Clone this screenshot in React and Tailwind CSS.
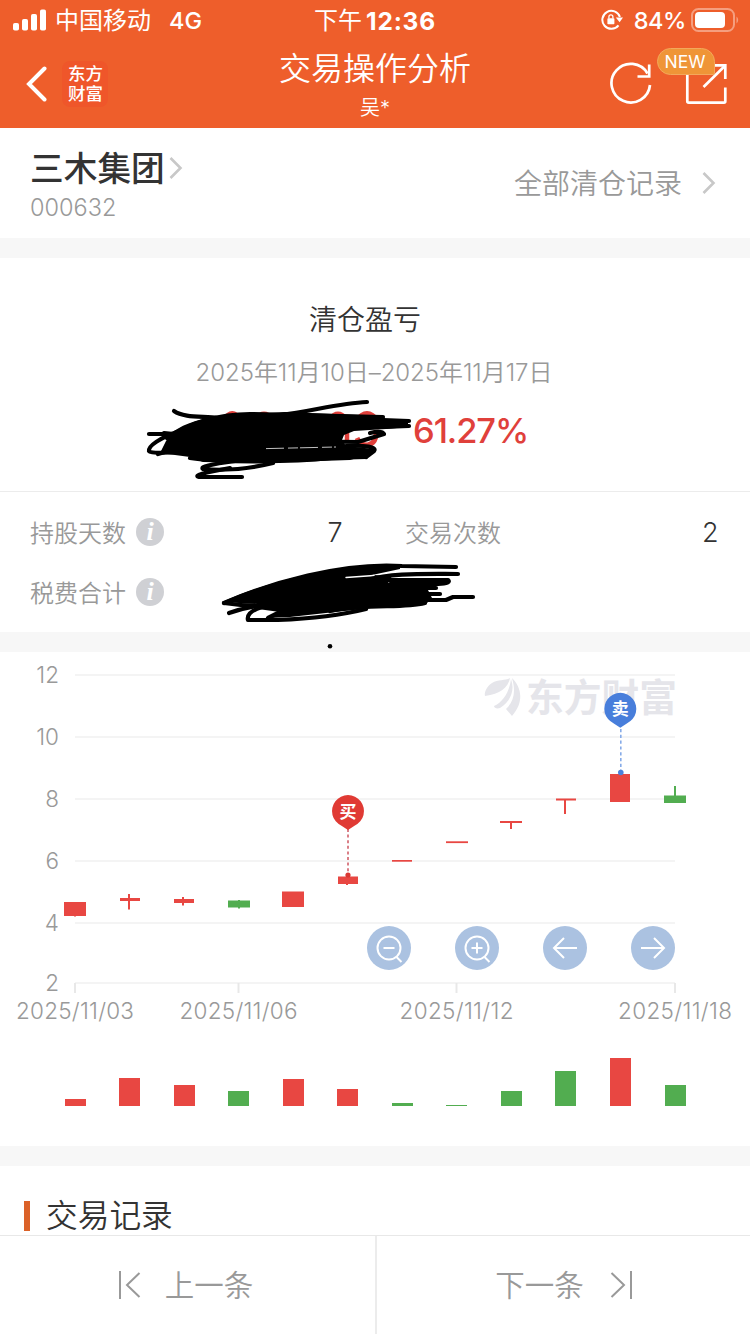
const RED = "#e84742";
const GREEN = "#52ad50";

const gridLines = [
  { label: "12", y: 23 },
  { label: "10", y: 85 },
  { label: "8", y: 147 },
  { label: "6", y: 209 },
  { label: "4", y: 271 },
  { label: "2", y: 331 },
];

const dates = [
  { label: "2025/11/03", x: 75, width: 118 },
  { label: "2025/11/06", x: 238.5, width: 118 },
  { label: "2025/11/12", x: 456.5, width: 114 },
  { label: "2025/11/18", x: 675, width: 114 },
];

// Coordinates are relative to the top of the price chart.
const candles = [
  { x: 64, w: 22, top: 250, h: 14, cx: 75, low: 264.5, high: 250, color: RED },
  { x: 120, w: 20, top: 246, h: 3, cx: 129, low: 257.5, high: 242, color: RED },
  { x: 174, w: 20, top: 247, h: 4, cx: 183, low: 253.5, high: 245, color: RED },
  { x: 228, w: 22, top: 248.5, h: 7, cx: 239, low: 256.5, high: 248, color: GREEN },
  { x: 282, w: 22, top: 239.5, h: 15.5, cx: 293, low: 255, high: 240, color: RED },
  { x: 338, w: 20, top: 224.5, h: 7.5, cx: 347, low: 233, high: 224, color: RED },
  { x: 392, w: 20, top: 208, h: 1.7, cx: 402, low: 209, high: 208, color: RED },
  { x: 446, w: 22, top: 189.3, h: 1.8, cx: 457, low: 190, high: 190, color: RED },
  { x: 500, w: 22, top: 169, h: 2, cx: 511, low: 177, high: 169, color: RED },
  { x: 556, w: 20, top: 146.5, h: 2, cx: 565, low: 162, high: 147, color: RED },
  { x: 610, w: 20, top: 122, h: 28, cx: 620, low: 150, high: 122, color: RED },
  { x: 664, w: 22, top: 143.5, h: 7.5, cx: 675, low: 151, high: 134, color: GREEN },
];

const volumes = [
  { h: 7, color: RED },
  { h: 28, color: RED },
  { h: 21.3, color: RED },
  { h: 15, color: GREEN },
  { h: 27, color: RED },
  { h: 17.3, color: RED },
  { h: 3.5, color: GREEN },
  { h: 1.5, color: GREEN },
  { h: 15.2, color: GREEN },
  { h: 34.7, color: GREEN },
  { h: 47.8, color: RED },
  { h: 20.7, color: GREEN },
];

function StatusBar() {
  return (
    <div className="grid h-10 grid-cols-3 items-center text-white">
      <div className="flex items-center pl-[13px]">
        <svg width="34" height="22" viewBox="0 0 34 22" fill="#fff">
          <rect x="0" y="14" width="6" height="7.5" rx="1.8" />
          <rect x="9" y="10" width="6" height="11.5" rx="1.8" />
          <rect x="18" y="5" width="6" height="16.5" rx="1.8" />
          <rect x="27" y="0.5" width="6" height="21" rx="1.8" />
        </svg>
        <span className="ml-[8px] pt-[2px] text-[24px] leading-none">中国移动</span>
        <span className="ml-[18px] pt-[2px] text-[23.5px] font-medium leading-none">4G</span>
      </div>
      <div className="flex items-center justify-center whitespace-nowrap pt-[2px] leading-none">
        <span className="text-[24px]">下午</span>
        <span className="ml-[4px] text-[24.5px] font-bold tracking-[0.8px]">12:36</span>
      </div>
      <div className="flex items-center justify-end pr-[11px]">
        <svg width="22" height="22" viewBox="0 0 22 22" fill="none">
          <path d="M17.5 16.3 A9 9 0 1 1 18.9 8" stroke="#fff" strokeWidth="2" />
          <path d="M14.8 8.5 H22 L18.6 13.2 Z" fill="#fff" />
          <rect x="6.4" y="9.2" width="7" height="6" rx="0.8" fill="#fff" />
          <path d="M7.9 9.5 V7.8 a2 2 0 0 1 4 0 V9.5" stroke="#fff" strokeWidth="1.3" />
        </svg>
        <span className="ml-[11px] pt-[2px] text-[23.5px] font-medium leading-none tracking-[-0.4px]">84%</span>
        <svg className="ml-[5px]" width="48" height="24" viewBox="0 0 48 24" fill="none">
          <rect x="1" y="1" width="42" height="22" rx="6.5" stroke="#fff" strokeOpacity="0.4" strokeWidth="2" />
          <rect x="4" y="4" width="30" height="16" rx="4" fill="#fff" />
          <path d="M45.5 8.5 a4.5 4.5 0 0 1 0 7 Z" fill="#fff" fillOpacity="0.4" />
        </svg>
      </div>
    </div>
  );
}

function NavBar() {
  return (
    <div className="grid h-[88px] grid-cols-3 text-white">
      <div className="flex items-center pl-[26px]">
        <svg width="22" height="36" viewBox="0 0 22 36" fill="none" stroke="#fff" strokeWidth="4" strokeLinecap="round">
          <path d="M18.5 2.5 L3 18 L18.5 33.5" />
        </svg>
        <div className="ml-[14px] flex size-[46px] flex-col items-center justify-center rounded-[8px] bg-[#ef562a] pl-px text-[17.5px] font-medium leading-[20px]">
          <span>东方</span>
          <span>财富</span>
        </div>
      </div>
      <div className="flex flex-col items-center whitespace-nowrap">
        <h1 className="mt-[12px] text-[32px] font-[350] leading-[34px]">交易操作分析</h1>
        <p className="mt-[12px] text-[20px] font-[350] leading-[20px]">吴*</p>
      </div>
      <div className="relative flex items-start justify-end pr-[22px] pt-[20px]">
        <svg className="mr-[30px] mt-[2px]" width="44" height="46" viewBox="0 0 44 46" fill="none" stroke="#fff" strokeWidth="2.7">
          <path d="M37.5 11.5 A19.3 19.3 0 1 0 40 23" />
          <path d="M27.5 14.5 H39.2 V2.5" />
        </svg>
        <svg width="44" height="46" viewBox="0 0 44 46" fill="none" stroke="#fff" strokeWidth="2.7">
          <path d="M23 5.3 H4.5 Q3.3 5.3 3.3 6.5 V41.3 Q3.3 42.7 4.7 42.7 H40 Q41.3 42.7 41.3 41.3 V27.5" />
          <path d="M31 5.3 H41.3 V19" />
          <path d="M41 5.8 L19.5 27" />
        </svg>
        <span className="absolute right-[35px] top-[8px] flex h-[27px] w-[58px] items-center justify-center rounded-[14px] rounded-br-[2px] border border-[#f3a85b] bg-[#ef9537] pr-[2px] text-[17.5px] leading-none">
          NEW
        </span>
      </div>
    </div>
  );
}

function Chevron() {
  return (
    <svg width="14" height="24" viewBox="0 0 14 24" fill="none" stroke="#c8c8c8" strokeWidth="2.6">
      <path d="M1.5 2 L11.5 12 L1.5 22" />
    </svg>
  );
}

function InfoIcon() {
  return (
    <span className="ml-[10px] flex size-7 items-center justify-center rounded-full bg-[#cfd0d4] font-['Liberation_Serif',serif] text-[26px] font-bold italic leading-none text-white">
      i
    </span>
  );
}

function ProfitScribble() {
  return (
    <svg className="absolute left-[140px] top-[138px]" width="280" height="86" viewBox="140 396 280 86" fill="none">
      <g stroke="#e0403b" strokeWidth="5">
        <path d="M224 420 Q232 407 241 420" />
        <path d="M256 419 Q264 409 272 419" />
        <path d="M330 419 Q338 409 346 419" />
        <path d="M356 421 Q367 406 378 421" />
        <path d="M347 431 V442" strokeWidth="4.5" />
        <path d="M357 438 Q361 446 368 445 Q377 443 376 430" />
      </g>
      <path
        fill="#000"
        d="M174 431 C184 424 203 417 224 416 L285 412 L383 416 L386 420 L408 422 L408 427 L386 429 L354 431 L344 435 L342 440 L346 446 L374 449 L368 455 L350 460 L260 463 L203 462 L190 457 L160 453 L166 441 Z"
      />
      <path d="M266 448.6 L336 447" stroke="#f3f3f3" strokeWidth="0.8" strokeDasharray="18 4 10 2" />
      <g stroke="#000" strokeWidth="4.2" strokeLinecap="round" strokeLinejoin="round">
        <path d="M174 411 C184 418 202 416 218 418" />
        <path d="M280 415 C310 412 338 403 367 402" />
        <path d="M149 434 H174 L164 433" />
        <path d="M177 432 C160 438 148 446 149 451 Q151 454 180 452" />
        <path d="M158 454 Q177 448 204 444" />
        <path d="M167 438 Q204 414 250 414 L383 417" />
        <path d="M383 420 L409 421" />
        <path d="M383 427 L409 426" />
        <path d="M281 441 L358 442 L384 434 Q382 430 370 433" />
        <path d="M346 446 C366 445 377 447 374 451 L366 457" />
        <path d="M190 458 C222 463 294 462 331 458 L366 457" />
        <path d="M235 461 Q198 466 203 469 Q236 472 273 463" />
        <path d="M230 468 Q190 475 199 477 H242" />
      </g>
    </svg>
  );
}

function FeeScribble() {
  return (
    <svg className="absolute left-[216px] top-[68px]" width="264" height="92" viewBox="216 560 264 92" fill="none">
      <path
        fill="#000"
        d="M222 602 C260 585 310 572 350 567 L400 566 L400 569 L372 575 L392 576 L388 583 L426 586 L432 598 L426 604 L380 607 L290 617 L268 618 L280 612 L250 608 L258 604 Z"
      />
      <path d="M346 577.5 L374 575.5" stroke="#fff" strokeWidth="1.4" strokeLinecap="round" />
      <g stroke="#000" strokeWidth="4.2" strokeLinecap="round" strokeLinejoin="round">
        <path d="M224 603 C270 583 342 562 402 566 L456 567" />
        <path d="M368 580 C390 573 420 574 458 574" />
        <path d="M388 580 H448 Q452 583 438 584 L390 584" />
        <path d="M424 588 H436" />
        <path d="M420 594 H440" />
        <path d="M400 600 H446 L453 597 H473" />
        <path d="M330 611 C370 603 402 609 425 603" />
        <path d="M224 603 Q250 607 272 605" />
        <path d="M229 613 Q240 609 252 607" />
        <path d="M262 607 Q246 612 248 620 H278 Q330 618 366 609" />
        <path d="M268 618 L284 610" />
      </g>
      <circle cx="330" cy="646.3" r="2.3" fill="#000" />
    </svg>
  );
}

function MarkerPin({ x, y, color, label }) {
  return (
    <g>
      <path
        fill={color}
        d={`M${x} ${y + 18.5} L${x - 6.5} ${y + 14.2} A16 16 0 1 1 ${x + 6.5} ${y + 14.2} Z`}
      />
      <text x={x} y={y + 6} textAnchor="middle" fontSize="17" fontWeight="700" fill="#fff">
        {label}
      </text>
    </g>
  );
}

function ChartButton({ children }) {
  return (
    <button className="flex size-11 items-center justify-center rounded-full bg-[#abc2e1]">
      <svg width="44" height="44" viewBox="0 0 44 44" fill="none" stroke="#fff" strokeWidth="2">
        {children}
      </svg>
    </button>
  );
}

function PriceChart() {
  return (
    <div className="relative">
      <svg className="block" width="750" height="380" viewBox="0 0 750 380">
        <g stroke="#f4f4f4" strokeWidth="2">
          {gridLines.map((g) => (
            <path key={g.label} d={`M75 ${g.y} H675`} />
          ))}
        </g>
        <g stroke="#e8e8e8" strokeWidth="2">
          {dates.map((d) => (
            <path key={d.label} d={`M${d.x} 331 V341`} />
          ))}
        </g>
        <g fill="#999" fontSize="22.5" fontWeight="350">
          {gridLines.map((g) => (
            <text key={g.label} x="59" y={g.y + 8} textAnchor="end">
              {g.label}
            </text>
          ))}
          {dates.map((d) => (
            <text key={d.label} x={d.x} y="367" textAnchor="middle" textLength={d.width}>
              {d.label}
            </text>
          ))}
        </g>
        <g fill="#e5e5ea">
          <path d="M485 44 C484 40 487 34 492 31 C498 27 505 29 510 26 C508 36 500 42 485 44 Z" />
          <path d="M494 54 C502 50 509 42 511 27 C515 38 511 49 500 56 C497 57 494 56 494 54 Z" />
          <path d="M512 64 L506 57 C514 49 516 40 512 26 C522 36 524 50 512 64 Z" />
          <text x="526" y="58.5" fontSize="38" fontWeight="700" textLength="151" lengthAdjust="spacingAndGlyphs">
            东方财富
          </text>
        </g>
        {candles.map((c) => (
          <g key={c.cx} fill={c.color}>
            <rect x={c.x} y={c.top} width={c.w} height={c.h} />
            <rect x={c.cx - 1} y={c.high} width="2" height={c.low - c.high} />
          </g>
        ))}
        <path d="M348 177 V222" stroke="#ce5560" strokeWidth="1.5" strokeDasharray="3 2.6" />
        <circle cx="348" cy="223" r="2.6" fill="#d93833" />
        <MarkerPin x={348} y={159.5} color="#e03a34" label="买" />
        <path d="M620.8 77 V119" stroke="#86abe8" strokeWidth="1.6" strokeDasharray="3.2 2.6" />
        <circle cx="620.8" cy="120.5" r="2.8" fill="#4a80dc" />
        <MarkerPin x={620.3} y={57.2} color="#487edb" label="卖" />
      </svg>
      <div className="absolute left-[367px] top-[274px] flex gap-11">
        <ChartButton>
          <circle cx="22" cy="22" r="11.5" />
          <path d="M16.5 22 H27.5 M29.5 31 L34.5 36" />
        </ChartButton>
        <ChartButton>
          <circle cx="22" cy="22" r="11.5" />
          <path d="M16.5 22 H27.5 M22 16.5 V27.5 M29.5 31 L34.5 36" />
        </ChartButton>
        <ChartButton>
          <path d="M34 22 H11 M21 12 L11 22 L21 32" />
        </ChartButton>
        <ChartButton>
          <path d="M10 22 H33 M23 12 L33 22 L23 32" />
        </ChartButton>
      </div>
    </div>
  );
}

export default function App() {
  return (
    <div className="flex h-[1334px] w-[750px] flex-col overflow-hidden bg-white font-['Inter','Noto_Sans_CJK_SC',sans-serif] text-[#333]">
      <header className="h-32 shrink-0 bg-[#ee5e2b]">
        <StatusBar />
        <NavBar />
      </header>

      <section className="flex h-[110px] shrink-0 justify-between pl-[30px] pr-[34px]">
        <div className="pt-[22px]">
          <div className="flex items-center gap-[4px]">
            <h2 className="pt-px text-[33.7px] font-medium leading-[36px]">三木集团</h2>
            <span className="-mt-[2px]">
              <Chevron />
            </span>
          </div>
          <p className="mt-[9px] text-[23.5px] font-[350] leading-[24px] text-[#999]">000632</p>
        </div>
        <div className="flex h-[110px] items-center gap-[20px] text-[28px] font-[350] text-[#999]">
          <span className="pt-px">全部清仓记录</span>
          <Chevron />
        </div>
      </section>

      <div className="h-5 shrink-0 bg-[#f7f7f7]" />

      <section className="relative flex h-[234px] shrink-0 flex-col items-center border-b border-[#ececec]">
        <h3 className="mr-[20px] mt-[47px] text-[28px] font-[350] leading-[30px]">清仓盈亏</h3>
        <p className="mr-[2px] mt-[25px] whitespace-nowrap text-[24px] font-[350] leading-[26px] tracking-[-0.05px] text-[#999]">
          2025年11月10日–2025年11月17日
        </p>
        <p className="mt-[25px] self-start pl-[413px] text-[34.5px] font-medium leading-[40px] tracking-[-1.1px] text-[#e0403b]">
          61.27%
        </p>
        <ProfitScribble />
      </section>

      <section className="relative flex h-[140px] shrink-0 flex-col pt-[10px] text-[24px] font-[350] text-[#999]">
        <div className="flex h-[60px] items-center pl-[30px] pr-[32px]">
          <span className="pt-[3px]">持股天数</span>
          <InfoIcon />
          <span className="ml-auto mr-[62px] w-4 pt-[2px] text-center text-[27px] text-[#333]">7</span>
          <span className="w-[297px] pt-[3px]">交易次数</span>
          <span className="w-4 pt-[2px] text-center text-[27px] text-[#333]">2</span>
        </div>
        <div className="flex h-[60px] items-center pl-[30px]">
          <span className="pt-[3px]">税费合计</span>
          <InfoIcon />
        </div>
        <FeeScribble />
      </section>

      <div className="h-5 shrink-0 bg-[#f7f7f7]" />

      <section className="h-[494px] shrink-0">
        <PriceChart />
        <div className="flex h-[74px] items-end gap-[33.55px] pl-[64.5px]">
          {volumes.map((v, i) => (
            <div key={i} className="w-[21px] shrink-0" style={{ height: v.h, backgroundColor: v.color }} />
          ))}
        </div>
      </section>

      <div className="h-5 shrink-0 bg-[#f7f7f7]" />

      <section className="flex h-[69px] shrink-0 items-end pb-1 pl-6">
        <div className="h-[30px] w-[6px] bg-[#db6128]" />
        <h3 className="-mb-px ml-[16px] text-[31.7px] font-[350] leading-[32px]">交易记录</h3>
      </section>

      <footer className="grid h-[99px] shrink-0 grid-cols-2 border-t border-[#e8e8e8] text-[29.5px] font-[350] text-[#999]">
        <button className="flex items-center justify-center pr-[3px]">
          <svg width="22" height="28" viewBox="0 0 22 28" fill="none" stroke="#999" strokeWidth="2">
            <path d="M1 0 V28 M20.5 2 L8 14 L20.5 26" />
          </svg>
          <span className="ml-[24px]">上一条</span>
        </button>
        <button className="flex items-center justify-center border-l-2 border-[#ececec]">
          <span className="mr-[26px]">下一条</span>
          <svg width="22" height="28" viewBox="0 0 22 28" fill="none" stroke="#999" strokeWidth="2">
            <path d="M21 0 V28 M1.5 2 L14 14 L1.5 26" />
          </svg>
        </button>
      </footer>
    </div>
  );
}
